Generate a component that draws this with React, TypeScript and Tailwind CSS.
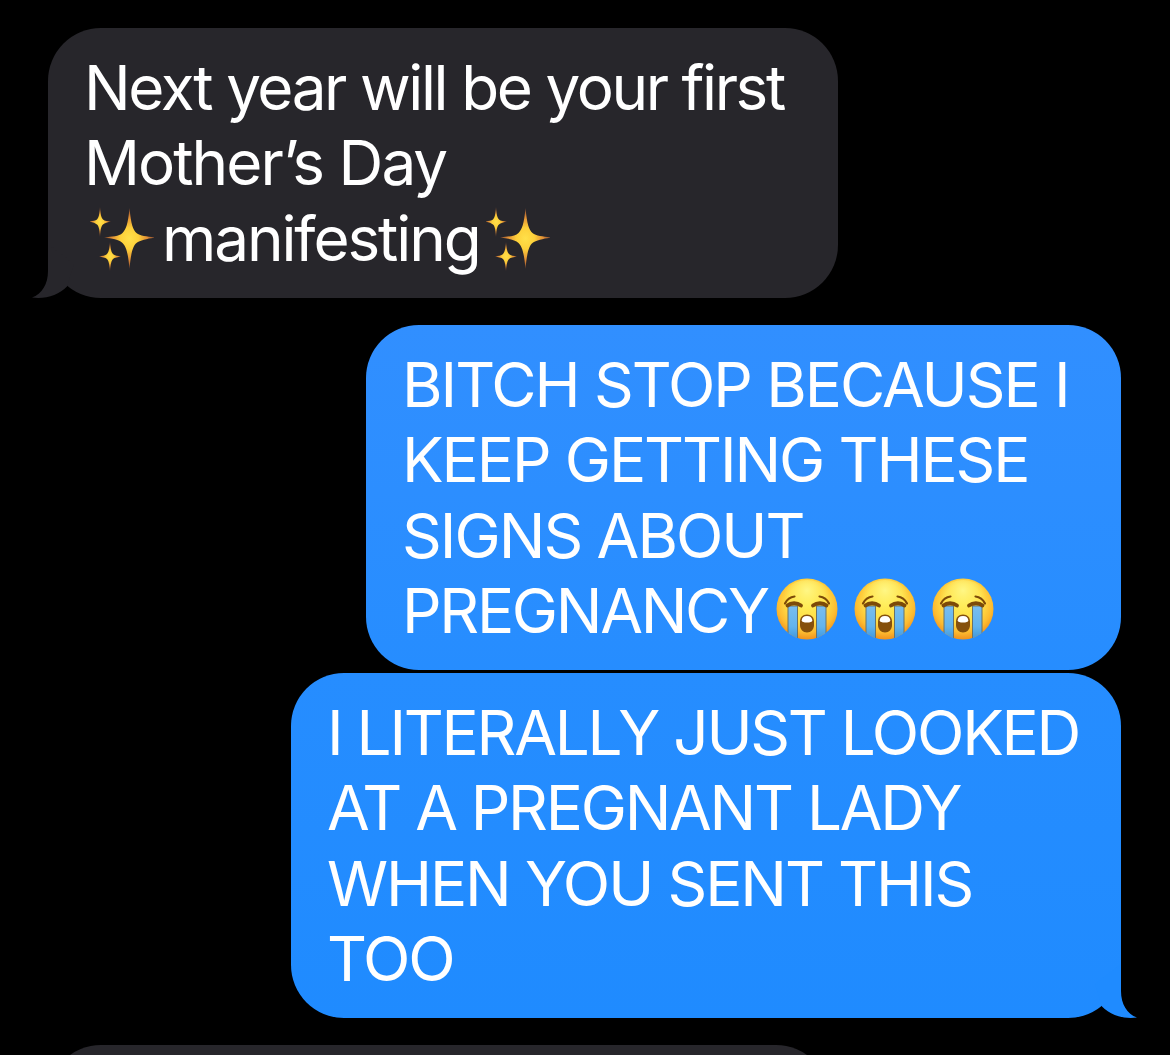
import type { ReactNode } from 'react'
import clsx from 'clsx'

type Side = 'in' | 'out'

function Sparkles() {
  return (
    <svg viewBox="0 0 64 64" className="mt-0.5 h-16 w-16 shrink-0" aria-label="sparkles">
      <defs>
        <radialGradient id="spark">
          <stop offset="0" stopColor="#ffe04a" />
          <stop offset="0.35" stopColor="#fdd03a" />
          <stop offset="0.7" stopColor="#e08c35" />
          <stop offset="1" stopColor="#7a4530" />
        </radialGradient>
      </defs>
      <g fill="url(#spark)">
        <path d="M39.500 1C41 17 43 23 46.500 26S58 29.500 65 30.500C58 31.500 50 33 46.500 36S41 45 39.500 62C38 45 36 39.500 32.500 36S22 31.500 14 30.500C22 29.500 29 29.500 32.500 26S38 17 39.500 1Z" />
        <path d="M10 0C10.500 8 11.500 11 13 12.500S18 14 21 14.500C18 15 14.500 16 13 17.500S10.500 21 10 30C9.500 21 8.500 19 7 17.500S2 15 -1 14.500C2 14 5.500 14 7 12.500S9.500 8 10 0Z" />
        <path d="M20 35C20.500 42 21.500 45.500 23 47S28 49 31 49.500C28 50 24.500 50.500 23 52S20.500 57 20 64C19.500 57 18.500 53.500 17 52S12 50 9 49.500C12 49 15.500 48.500 17 47S19.500 42 20 35Z" />
      </g>
    </svg>
  )
}

function SobFace() {
  return (
    <svg viewBox="0 0 62 62" className="h-[62px] w-[62px] shrink-0" aria-label="sobbing face">
      <defs>
        <radialGradient id="face" cx="0.5" cy="0.4" r="0.62">
          <stop offset="0" stopColor="#ffec50" />
          <stop offset="0.5" stopColor="#ffe04a" />
          <stop offset="0.78" stopColor="#fdbb30" />
          <stop offset="1" stopColor="#ee8a1a" />
        </radialGradient>
        <radialGradient id="shine" cx="0.5" cy="0.18" r="0.4">
          <stop offset="0" stopColor="#fff98c" stopOpacity="0.9" />
          <stop offset="1" stopColor="#fff06a" stopOpacity="0" />
        </radialGradient>
        <linearGradient id="tear" x1="0" x2="0" y1="0" y2="1">
          <stop offset="0" stopColor="#78bdf0" />
          <stop offset="0.6" stopColor="#62b4ed" />
          <stop offset="1" stopColor="#3c94dc" />
        </linearGradient>
        <clipPath id="round">
          <circle cx="31" cy="31" r="30.500" />
        </clipPath>
      </defs>
      <circle cx="31" cy="31" r="30.500" fill="url(#face)" />
      <circle cx="31" cy="31" r="29" fill="url(#shine)" />
      <g clipPath="url(#round)">
        <path d="M12 28H21.500V62H12ZM40.500 28H50V62H40.500Z" fill="url(#tear)" stroke="#68736a" strokeWidth="1" />
      </g>
      <g fill="none" stroke="#7d4a08" strokeLinecap="round">
        <path d="M9 25.500C11 21.500 14.500 19 18.500 18.500M53 25.500C51 21.500 47.500 19 43.500 18.500" strokeWidth="2.200" />
        <path d="M11.500 27.500C15 24.500 21 24.500 25 27.500M50.500 27.500C47 24.500 41 24.500 37 27.500" strokeWidth="3.800" />
      </g>
      <path d="M31 36.500C35.500 36.500 38 39.500 38 43.500V47C38 51.500 35 54.500 31 54.500S24 51.500 24 47V43.500C24 39.500 26.500 36.500 31 36.500Z" fill="#85500c" />
      <path d="M31 38C34.500 38 36.300 40 36.300 42.500C36.300 44 34 44.500 31 44.500S25.700 44 25.700 42.500C25.700 40 27.500 38 31 38Z" fill="#fff" />
    </svg>
  )
}

function Tail({ side }: { side: Side }) {
  return (
    <svg
      viewBox="0 0 54 54"
      className={clsx(
        'absolute bottom-0 h-[54px] w-[54px]',
        side === 'in' ? '-left-4 fill-[#27262b]' : '-right-4 -scale-x-100 fill-[#1f8bff]',
      )}
      aria-hidden
    >
      <path d="M16 0V27C16 40 10 50 0 53.500C13 55.500 27 51 35 42.500L42 20Z" />
    </svg>
  )
}

function Bubble({ side, tail, className, children }: { side: Side; tail?: boolean; className?: string; children?: ReactNode }) {
  return (
    <div
      className={clsx(
        'relative shrink-0 rounded-[53px] px-9 py-[22px]',
        side === 'in' ? 'self-start bg-[#27262b]' : 'self-end',
        className,
      )}
    >
      {tail && <Tail side={side} />}
      {children}
    </div>
  )
}

function Line({ className, children }: { className?: string; children: ReactNode }) {
  return <p className={clsx('relative flex h-[75.3px] items-center whitespace-nowrap', className)}>{children}</p>
}

export default function App() {
  return (
    <main className="flex h-[1055px] w-[1170px] flex-col overflow-hidden bg-black pt-7 pr-[49px] pl-12 font-[Inter,'Liberation_Sans',sans-serif] text-[62px] leading-[75.3px] text-white">
      <Bubble side="in" tail className="h-[270px] w-[790px]">
        <Line className="tracking-[-2.42px]">Next year will be your first</Line>
        <Line className="tracking-[-1.95px]">Mother’s Day</Line>
        <Line className="tracking-[-2.1px]">
          <span className="flex w-[78px] pl-1.5">
            <Sparkles />
          </span>
          <span>manifesting</span>
          <span className="flex pl-1.5">
            <Sparkles />
          </span>
        </Line>
      </Bubble>

      <Bubble side="out" className="mt-[27px] h-[345px] w-[755px] bg-linear-to-b from-[#318fff] to-[#268dff]">
        <Line className="tracking-[-2.03px]">BITCH STOP BECAUSE I</Line>
        <Line className="tracking-[-2.1px]">KEEP GETTING THESE</Line>
        <Line className="tracking-[-2px]">SIGNS ABOUT</Line>
        <Line className="tracking-[-2.3px]">
          <span>PREGNANCY</span>
          <span className="-mt-1 flex gap-4 pl-2">
            <SobFace />
            <SobFace />
            <SobFace />
          </span>
        </Line>
      </Bubble>

      <Bubble side="out" tail className="mt-[3px] h-[345px] w-[830px] bg-linear-to-b from-[#268dff] to-[#1f8bff]">
        <Line className="tracking-[-2.25px]">I LITERALLY JUST LOOKED</Line>
        <Line className="tracking-[-2.28px]">AT A PREGNANT LADY</Line>
        <Line className="tracking-[-2.12px]">WHEN YOU SENT THIS</Line>
        <Line className="tracking-[-2.2px]">TOO</Line>
      </Bubble>

      <Bubble side="in" className="mt-[27px] h-[120px] w-[781px]" />
    </main>
  )
}
